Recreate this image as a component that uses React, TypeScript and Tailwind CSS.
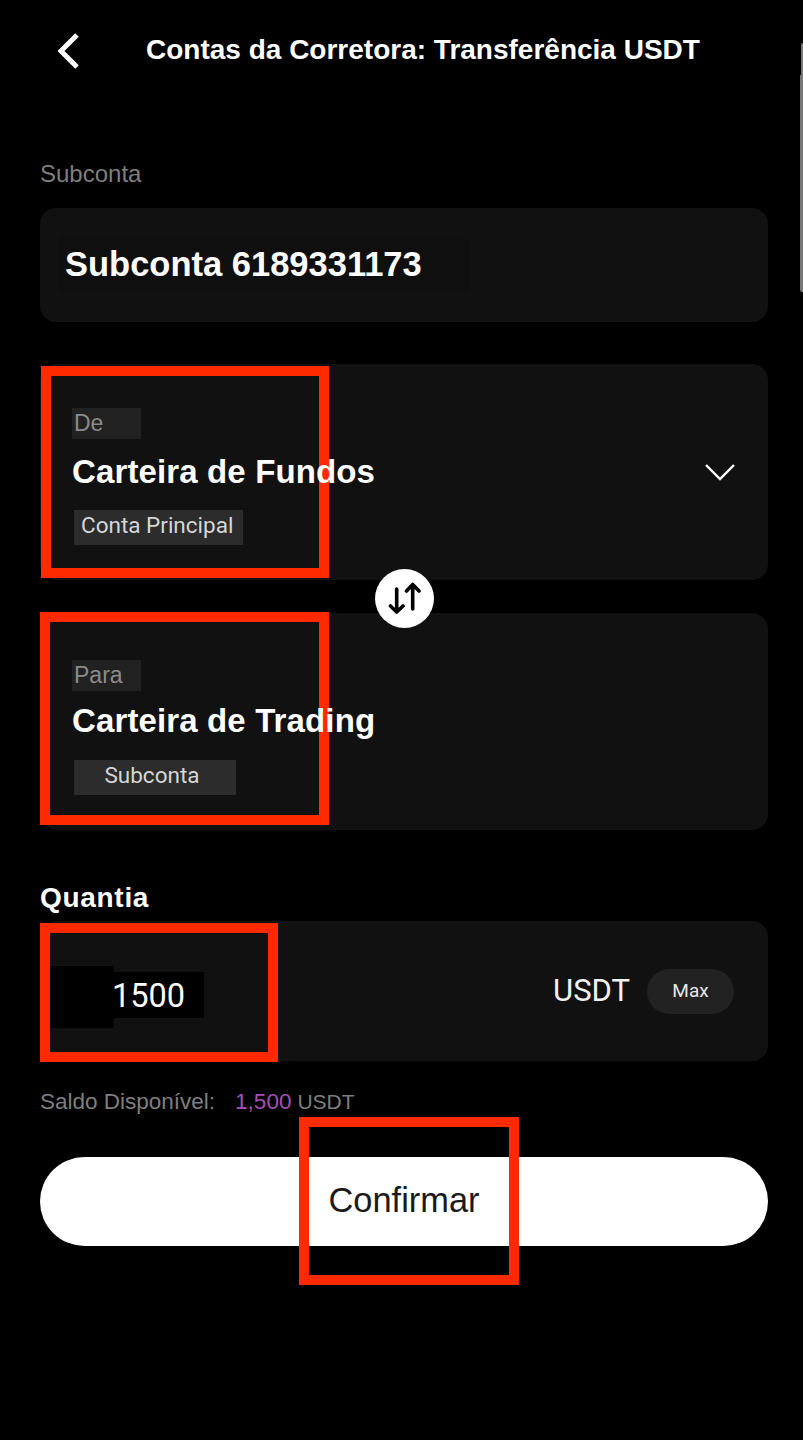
const sans = "font-['Liberation_Sans',Arial,sans-serif]";

function RedBox({ className }: { className: string }) {
  return <div className={"absolute border-[10px] border-[#ff2a00] " + className} />;
}

function WalletCard({ label, title, tag, tagClass, boxClass, cardClass, labelClass, titleClass, tagGapClass, children }: {
  label: string; title: string; tag: string; tagClass: string; boxClass: string; cardClass: string; labelClass: string; titleClass: string; tagGapClass: string; children?: React.ReactNode;
}) {
  return (
    <div className={"relative rounded-2xl bg-[#111111] " + cardClass}>
      <RedBox className={boxClass} />
      <div className="relative z-10 flex h-full flex-col items-start pl-8">
        <div className={"flex h-[31px] w-[69px] items-center bg-[#212121] pl-[2px] font-['Liberation_Sans'] text-[23px] text-[#8a8a8a] " + labelClass}>{label}</div>
        <div className={"h-[40px] font-['Liberation_Sans'] text-[33px] leading-[40px] font-bold tracking-[0.13px] text-white " + titleClass}>{title}</div>
        <div className={"ml-[2px] flex h-[35px] items-center bg-[#2c2c2c] pb-[3px] font-['Roboto'] text-[22.5px] text-[#d6d6d6] " + tagGapClass + " " + tagClass}>{tag}</div>
      </div>
      {children}
    </div>
  );
}

export default function App() {
  return (
    <div className={"relative min-h-[1440px] w-full overflow-hidden bg-black pl-10 pr-[35px] " + sans}>
      <div className="absolute top-[43px] right-0 h-[249px] w-[2px] rounded-tl bg-[#777777]" />
      <div className="absolute top-[75px] right-0 h-[217px] w-[3px] rounded-bl bg-[#777777]" />
      <header className="relative flex h-[100px] items-center">
        <svg className="absolute left-[14px] top-[33px] h-[36px] w-[28px]" viewBox="0 0 28 36" fill="none" stroke="white" strokeWidth="5" strokeLinecap="butt" strokeLinejoin="miter">
          <path d="M23 2 L7 18 L23 34" />
        </svg>
        <h1 className="ml-[106px] text-[28px] leading-none font-bold whitespace-nowrap text-white">Contas da Corretora: Transferência USDT</h1>
      </header>

      <div className="mt-[60px] text-[24px] leading-[28px] text-[#7e7e7e]">Subconta</div>
      <section className="mt-[20px] flex h-[114px] items-center rounded-2xl bg-[#111111] pl-[19px]">
        <div className="flex h-[56px] w-[411px] items-center bg-[#0f0f0f] pl-[6px] text-[34.5px] font-bold text-white">Subconta 6189331173</div>
      </section>

      <div className="relative mt-[42px]">
        <WalletCard
          label="De"
          title="Carteira de Fundos"
          tag="Conta Principal"
          tagClass="w-[169px] pl-[7px]"
          boxClass="left-[1px] top-[2px] h-[212px] w-[288px]"
          cardClass="h-[216px]"
          labelClass="mt-11"
          titleClass="mt-[13px]"
          tagGapClass="mt-[18px]"
        >
          <svg className="absolute right-[33px] top-[99px] h-[18px] w-[30px]" viewBox="0 0 30 18" fill="none" stroke="white" strokeWidth="2.4">
            <path d="M1 2 L15 16 L29 2" />
          </svg>
        </WalletCard>
        <div className="absolute left-[335px] top-[205px] z-20 flex h-[59px] w-[59px] items-center justify-center rounded-full bg-white">
          <svg className="h-[34px] w-[34px]" viewBox="0 0 34 34" fill="none" stroke="black" strokeWidth="3.6" strokeLinecap="round" strokeLinejoin="round">
            <path d="M8.7 7 V30 M2.5 24 L8.7 30 L15 24" />
            <path d="M24.7 2.5 V27 M18.5 9 L24.7 2.5 L31 9" />
          </svg>
        </div>
        <div className="h-[33px]" />
        <WalletCard
          label="Para"
          title="Carteira de Trading"
          tag="Subconta"
          tagClass="w-[162px] justify-center pr-[6px]"
          boxClass="left-0 top-[-1px] h-[213px] w-[289px]"
          cardClass="h-[217px]"
          labelClass="mt-[47px]"
          titleClass="mt-[10px]"
          tagGapClass="mt-[19px]"
        />
      </div>

      <div className="mt-[52px] text-[28px] leading-[32px] font-bold tracking-[0.7px] text-white">Quantia</div>
      <section className="relative mt-[7px] flex h-[140px] items-center rounded-2xl bg-[#111111]">
        <RedBox className="left-0 top-[2px] h-[139px] w-[238px]" />
        <div className="relative z-10 ml-[10px] flex items-center pt-[11px]">
          <div className="h-[62px] w-[64px] bg-black" />
          <div className="-mt-[3px] flex h-[46px] w-[90px] items-center bg-black pt-[3px] font-['Roboto'] text-[32.5px] text-white">
            <span className="-ml-[2px]">1500</span>
          </div>
        </div>
        <div className="ml-auto mr-[34px] flex items-center gap-[17px]">
          <span className="font-['Roboto'] text-[31px] text-[#f2f2f2]">USDT</span>
          <span className="flex h-[45px] w-[87px] items-center justify-center rounded-full bg-[#222222] font-['Roboto'] text-[19px] text-[#e6e6e6]">Max</span>
        </div>
      </section>

      <div className="mt-[27px] flex items-center text-[22.5px] leading-[28px] text-[#7e7e7e]">
        <span>Saldo Disponível:</span>
        <span className="ml-[20px] text-[#a64fb5]">1,500</span>
        <span className="ml-[6px] text-[21px]">USDT</span>
      </div>

      <div className="relative mt-[41px]">
        <button className="flex h-[89px] w-full items-center justify-center rounded-full bg-white pb-[2px] text-[34.4px] text-[#1a1a1a]">Confirmar</button>
        <RedBox className="left-[259px] top-[-40px] h-[168px] w-[220px]" />
      </div>
    </div>
  );
}
